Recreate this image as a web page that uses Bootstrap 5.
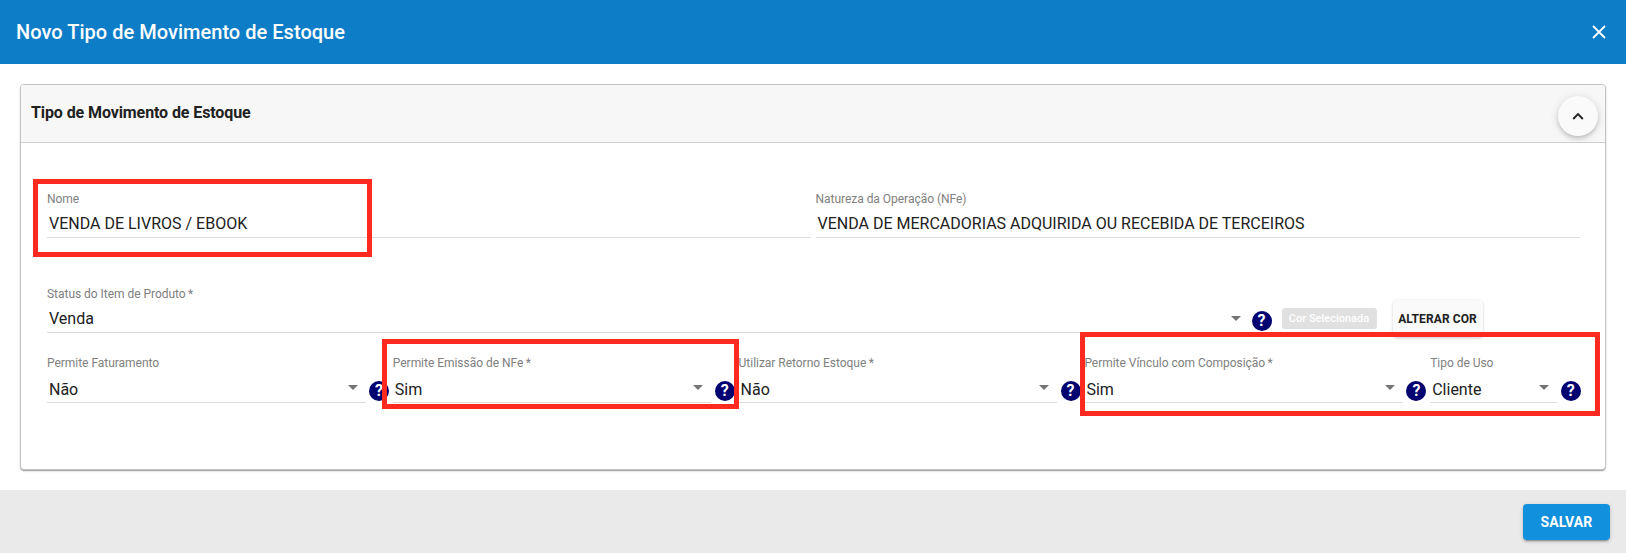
<!DOCTYPE html>
<html lang="pt-BR">
<head>
<meta charset="utf-8">
<title>Novo Tipo de Movimento de Estoque</title>
<link href="https://cdn.jsdelivr.net/npm/bootstrap@5.3.0/dist/css/bootstrap.min.css" rel="stylesheet">
<style>
html,body{height:553px;overflow:hidden;background:#fff}
body{position:relative;font-family:Roboto,"Liberation Sans",sans-serif;color:#212121}
.topo{height:64px;background:#0d7dc8;color:#fff;padding:0 19px 0 16px}
.topo h1{font-size:20px;font-weight:500;margin:0;font-family:Roboto,sans-serif;letter-spacing:.03px}
.fechar{width:16px;height:16px;display:block}
.miolo{height:426px;padding:20px 20px 0 20px}
.cartao{height:386px;border:1px solid #c4c4c4;border-radius:4px;box-shadow:0 2px 1px -1px rgba(0,0,0,.2),0 1px 1px rgba(0,0,0,.14),0 1px 3px rgba(0,0,0,.12)}
.cartao .card-header{height:58px;padding:0 0 0 10px;background:#f7f7f7;border-bottom:1px solid #cfcfcf;position:relative;border-radius:3px 3px 0 0}
.cartao h2{font-size:16px;font-weight:700;margin:0 0 2px;color:#212121;font-family:Roboto,sans-serif;letter-spacing:-.1px}
.recolher{position:absolute;right:7px;top:11px;width:40px;height:40px;border-radius:50%;background:#fafafa;box-shadow:0 3px 5px -1px rgba(0,0,0,.2),0 1px 10px rgba(0,0,0,.12);border:0;padding:0}
.cartao .card-body{padding:49px 0 0 26px}
.campo{height:46px;border-bottom:1px solid #dcdcdc;position:relative;flex:none}
.campo label{display:block;font-size:12px;line-height:14px;color:#808080;margin:0;white-space:nowrap;letter-spacing:-.03px}
.campo .valor{display:block;font-size:16px;line-height:24px;margin-top:6px;padding-left:2px;color:#212121;white-space:nowrap}
.seta{position:absolute;right:8px;top:29px;width:0;height:0;border-left:5px solid transparent;border-right:5px solid transparent;border-top:5px solid #757575}
.ajuda{width:20px;height:20px;border-radius:50%;background:#000070;color:#fff;font-size:16px;line-height:20px;font-weight:700;text-align:center;flex:none}
.linha-a{gap:4.5px;margin-bottom:49px}
.linha-a .campo{width:764px}
.linha-b{margin-bottom:23px;height:46px}
.linha-b .campo{width:1201.5px}
.linha-b .ajuda{margin:24px 0 0 3px}
.etiqueta-cor{margin:21px 0 0 10px;width:95px;height:21px;background:#e0e0e0;border-radius:3px;color:#fff;font-size:11px;font-weight:500;line-height:21px;text-align:center;white-space:nowrap;overflow:hidden}
.trocar{margin:13px 0 0 16px;width:90px;height:37px;padding:0;border:0;border-radius:4px;background:#fafafa;color:#212121;font-size:12px;font-weight:700;letter-spacing:.1px;box-shadow:0 2px 3px rgba(0,0,0,.12),0 0 3px rgba(0,0,0,.08);white-space:nowrap}
.linha-c .grupo{width:345.8px;flex:none;display:flex}
.linha-c .campo{height:47px}
.linha-c .valor{margin-top:7.5px}
.linha-c .grupo .campo{width:318.5px}
.linha-c .ajuda{margin:25px 0 0 3.5px}
.linha-c .curto .campo{width:127px}
.linha-c .curto{width:160px}
.rodape{height:63px;background:#eaeaea;padding:14px 16px 0 0}
.salvar{width:87px;height:36px;padding:0;border:0;border-radius:4px;background:#1190dd;color:#fff;font-size:14px;font-weight:700;letter-spacing:.1px;box-shadow:0 3px 1px -2px rgba(0,0,0,.2),0 2px 2px rgba(0,0,0,.14),0 1px 5px rgba(0,0,0,.12)}
.salvar:hover{background:#1190dd;color:#fff}
.destaque{position:absolute;border:5px solid #ff2a1f;pointer-events:none}
.destaque-a{left:33px;top:179px;width:339px;height:78px}
.destaque-b{left:381.5px;top:339px;width:357.5px;height:70px}
.destaque-c{left:1079.5px;top:332px;width:520px;height:84px}
</style>
</head>
<body>
<header class="topo d-flex align-items-center justify-content-between">
  <h1>Novo Tipo de Movimento de Estoque</h1>
  <svg class="fechar" viewBox="0 0 16 16" aria-label="Fechar"><path d="M2 2 14 14M14 2 2 14" stroke="#fff" stroke-width="1.8" fill="none"/></svg>
</header>
<main class="miolo">
  <section class="card cartao">
    <div class="card-header d-flex align-items-center">
      <h2>Tipo de Movimento de Estoque</h2>
      <button class="recolher d-flex align-items-center justify-content-center" type="button" aria-label="Recolher">
        <svg width="12" height="8" viewBox="0 0 12 8"><path d="M1.2 7 6 2.2 10.8 7" stroke="#212121" stroke-width="1.9" fill="none"/></svg>
      </button>
    </div>
    <div class="card-body">
      <div class="d-flex linha-a">
        <div class="campo"><label>Nome</label><span class="valor">VENDA DE LIVROS / EBOOK</span></div>
        <div class="campo"><label>Natureza da Operação (NFe)</label><span class="valor">VENDA DE MERCADORIAS ADQUIRIDA OU RECEBIDA DE TERCEIROS</span></div>
      </div>
      <div class="d-flex linha-b">
        <div class="campo"><label>Status do Item de Produto&#8201;*</label><span class="valor">Venda</span><i class="seta"></i></div>
        <div class="ajuda">?</div>
        <div class="etiqueta-cor">Cor Selecionada</div>
        <button class="btn trocar" type="button">ALTERAR COR</button>
      </div>
      <div class="d-flex linha-c">
        <div class="grupo"><div class="campo"><label>Permite Faturamento</label><span class="valor">Não</span><i class="seta"></i></div><div class="ajuda">?</div></div>
        <div class="grupo"><div class="campo"><label>Permite Emissão de NFe&#8201;*</label><span class="valor">Sim</span><i class="seta"></i></div><div class="ajuda">?</div></div>
        <div class="grupo"><div class="campo"><label>Utilizar Retorno Estoque&#8201;*</label><span class="valor">Não</span><i class="seta"></i></div><div class="ajuda">?</div></div>
        <div class="grupo"><div class="campo"><label>Permite Vínculo com Composição&#8201;*</label><span class="valor">Sim</span><i class="seta"></i></div><div class="ajuda">?</div></div>
        <div class="grupo curto"><div class="campo"><label>Tipo de Uso</label><span class="valor">Cliente</span><i class="seta"></i></div><div class="ajuda">?</div></div>
      </div>
    </div>
  </section>
</main>
<footer class="rodape d-flex justify-content-end align-items-start">
  <button class="btn salvar" type="button">SALVAR</button>
</footer>
<div class="destaque destaque-a"></div>
<div class="destaque destaque-b"></div>
<div class="destaque destaque-c"></div>
<script src="https://cdn.jsdelivr.net/npm/bootstrap@5.3.0/dist/js/bootstrap.bundle.min.js"></script>
</body>
</html>
